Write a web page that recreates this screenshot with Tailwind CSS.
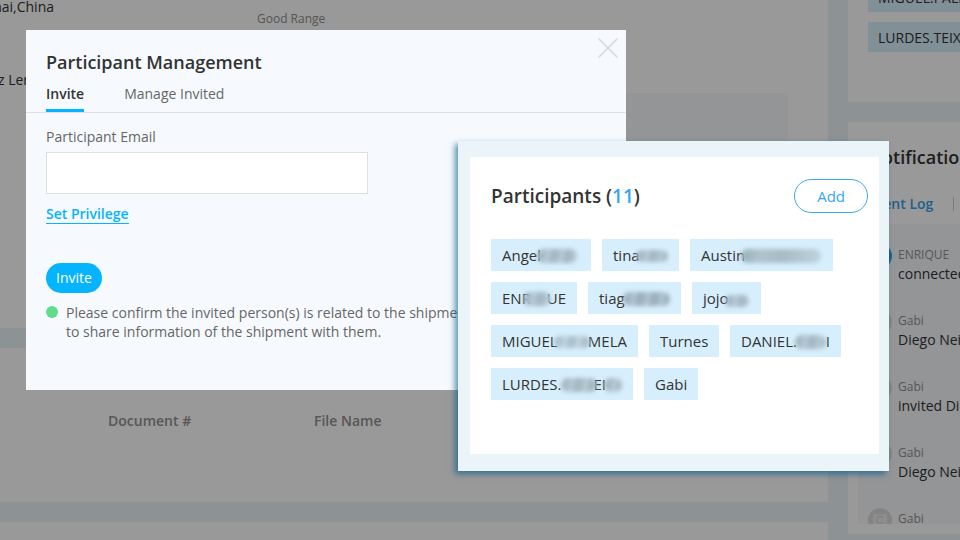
<!DOCTYPE html>
<html lang="en">
<head>
<meta charset="utf-8">
<meta name="viewport" content="width=device-width, initial-scale=1">
<title>Participant Management</title>
<script src="https://cdn.jsdelivr.net/npm/@tailwindcss/browser@4"></script>
</head>
<body class="font-['Open_Sans','Noto_Sans',sans-serif] text-sm text-[#333]">
<div class="relative h-screen overflow-hidden bg-[#ecf4f8]">

  <!-- Shipment page -->
  <div class="flex h-full gap-5">
    <main class="flex min-w-0 flex-1 flex-col gap-5">
      <section class="flex h-[328px] shrink-0 flex-col bg-white">
        <div class="flex h-[93px] shrink-0">
          <div class="flex w-[54px] shrink-0 flex-col justify-between overflow-hidden pb-1">
            <p class="flex h-[14px] items-center justify-end whitespace-nowrap">Shanghai,China</p>
            <p class="-ml-0.5 h-[19px] whitespace-nowrap leading-[19px]">z Ler</p>
          </div>
          <p class="ml-[203px] pt-2.5 text-xs leading-[18px] text-[#8e8e8e]">Good Range</p>
        </div>
        <div class="mx-10 h-[215px] bg-[#f7f9fc]"></div>
      </section>
      <section class="h-[154px] shrink-0 bg-white pl-[108px] pt-[62px]">
        <table class="text-left">
          <thead>
            <tr class="leading-[22px] text-[#919191]">
              <th scope="col" class="w-[206px] p-0 font-semibold">Document #</th>
              <th scope="col" class="w-[206px] p-0 font-semibold">File Name</th>
            </tr>
          </thead>
        </table>
      </section>
      <section class="flex-1 bg-white"></section>
    </main>

    <aside class="flex w-28 shrink-0 flex-col gap-5 overflow-hidden">
      <section class="flex h-[102px] shrink-0 flex-col items-start justify-end gap-2.5 bg-white pb-[50px] pl-5">
        <span class="flex h-[30px] shrink-0 items-center whitespace-nowrap bg-[#d7effb] px-2.5 pt-0.5">MIGUEL.PALMELA</span>
        <span class="flex h-[30px] shrink-0 items-center whitespace-nowrap bg-[#d7effb] px-2.5 pt-0.5">LURDES.TEIXEIRA</span>
      </section>
      <section class="flex h-[412px] shrink-0 flex-col bg-white pb-2.5 pl-2.5">
        <h2 class="pl-2.5 pt-[22px] text-lg font-semibold leading-[26px]">Notifications</h2>
        <div class="flex h-[54px] shrink-0 items-center gap-5 pl-2.5 pt-3.5">
          <a href="#log" class="shrink-0 font-semibold text-[#3aa0e8]">Event Log</a>
          <span class="h-3.5 w-px shrink-0 bg-[#ccc]"></span>
        </div>
        <ul class="min-h-0 flex-1 overflow-hidden bg-[#f7f9fc] pl-2.5 pt-5 whitespace-nowrap">
          <li class="flex h-[66px] gap-1.5">
            <span class="size-6 shrink-0 rounded-full bg-[#2f9fe8]"></span>
            <div><p class="text-xs leading-[22px] text-[#919191]">ENRIQUE</p><p class="leading-4">connected</p></div>
          </li>
          <li class="flex h-[66px] gap-1.5">
            <span class="size-6 shrink-0 rounded-full bg-[#dcdcdc]"></span>
            <div><p class="text-xs leading-[22px] text-[#919191]">Gabi</p><p class="leading-4">Diego Neiva</p></div>
          </li>
          <li class="flex h-[66px] gap-1.5">
            <span class="size-6 shrink-0 rounded-full bg-[#dcdcdc]"></span>
            <div><p class="text-xs leading-[22px] text-[#919191]">Gabi</p><p class="leading-4">invited Diego</p></div>
          </li>
          <li class="flex h-[66px] gap-1.5">
            <span class="size-6 shrink-0 rounded-full bg-[#dcdcdc]"></span>
            <div><p class="text-xs leading-[22px] text-[#919191]">Gabi</p><p class="leading-4">Diego Neiva</p></div>
          </li>
          <li class="flex h-[66px] gap-1.5">
            <svg class="size-6 shrink-0" viewBox="0 0 24 24" fill="none" aria-hidden="true">
              <circle cx="12" cy="12" r="12" fill="#dadada"/>
              <rect x="5" y="6" width="14" height="14" fill="#ececed"/>
              <path d="M15 9.500A3.600 3.600 0 1 0 15 14.500" stroke="#d2d2d2" stroke-width="1.200"/>
            </svg>
            <div><p class="text-xs leading-[22px] text-[#919191]">Gabi</p></div>
          </li>
        </ul>
      </section>
    </aside>
  </div>

  <div class="absolute inset-0 bg-black/40"></div>

  <!-- Participant management dialog -->
  <div role="dialog" aria-labelledby="dialog-title" class="absolute left-[26px] top-[30px] h-[360px] w-[600px] bg-[#f6fafe] text-[#666]">
    <header class="flex justify-between pl-5 pr-2 pt-2">
      <h1 id="dialog-title" class="pt-3 text-lg font-semibold leading-6 text-[#333]">Participant Management</h1>
      <button type="button" aria-label="Close" class="size-5">
        <svg viewBox="0 0 20 20" class="size-5" fill="none" stroke="#dfdfdf" stroke-width="2"><path d="M0.500 0.500L19.500 19.500M19.500 0.500L0.500 19.500"/></svg>
      </button>
    </header>
    <nav class="flex gap-10 border-b border-[#dfdfdf] px-5 pt-[9px]">
      <button type="button" class="border-b-[3px] border-[#05b4ff] pb-1 font-semibold leading-[22px] text-[#333]">Invite</button>
      <button type="button" class="border-b-[3px] border-transparent pb-1 leading-[22px]">Manage Invited</button>
    </nav>
    <form class="flex flex-col items-start px-5 pt-3">
      <label for="email" class="leading-6">Participant Email</label>
      <input id="email" type="email" class="mt-[3px] h-[42px] w-[322px] border border-[#dfdfdf] bg-white px-3">
      <a href="#privilege" class="mt-2.5 border-b border-[#05b4ff] font-semibold leading-[19px] text-[#05b4ff]">Set Privilege</a>
      <button type="button" class="mt-[39px] h-[30px] rounded-full bg-[#05b4ff] px-2.5 text-white">Invite</button>
      <div class="mt-2.5 flex gap-2">
        <span class="mt-[3px] size-3 shrink-0 rounded-full bg-[#5fdd8a]"></span>
        <p class="leading-[19px]">Please confirm the invited person(s) is related to the shipment<br>to share information of the shipment with them.</p>
      </div>
    </form>
  </div>

  <!-- Participants card -->
  <section class="absolute left-[458px] top-[141px] h-[330px] w-[431px] bg-[#ebf4f8] pb-[17px] pl-3 pr-2.5 pt-4 text-[15px] shadow-[-3px_3px_6px_#005a8ca6]">
    <div class="h-full bg-white pl-[21px] pr-[11px] pt-[22px]">
      <div class="flex items-center justify-between">
        <h2 class="pt-0.5 text-[19px] font-semibold">Participants (<span class="text-[#34a5f5]">11</span>)</h2>
        <button type="button" class="h-[34px] rounded-full border border-[#3fa9f0] px-[22px] pt-0.5 text-[#34a5f5]">Add</button>
      </div>
      <ul class="mt-[26px] flex flex-wrap gap-[11px] whitespace-nowrap">
        <li class="flex h-8 w-[100px] items-center bg-[#d7effc] px-[11px] pt-0.5">Angel<span class="-ml-1 h-3.5 w-10 rounded-full bg-[repeating-linear-gradient(100deg,#a3b8c3_0_6px,#b5cad5_11px_14px)] blur-[2px]"></span></li>
        <li class="flex h-8 w-[77px] items-center bg-[#d7effc] px-[11px] pt-0.5">tina<span class="-ml-1 h-3 w-8 rounded-full bg-[repeating-linear-gradient(100deg,#a3b8c3_0_6px,#b5cad5_11px_14px)] blur-[2px]"></span></li>
        <li class="flex h-8 w-[143px] items-center bg-[#d7effc] px-[11px] pt-0.5">Austin<span class="-ml-1 h-3.5 w-20 rounded-full bg-[linear-gradient(100deg,#98adb8,#afc4cf_25%,#a6bbc6_50%,#bdd3de)] blur-[2px]"></span></li>
        <li class="flex h-8 w-[86px] items-center bg-[#d7effc] px-[11px] pt-0.5">ENR<span class="-ml-2 -mr-1 h-3.5 flex-1 rounded-full bg-[repeating-linear-gradient(100deg,#a3b8c3_0_6px,#b5cad5_11px_14px)] blur-[2px]"></span>UE</li>
        <li class="flex h-8 w-[93px] items-center bg-[#d7effc] px-[11px] pt-0.5">tiag<span class="-ml-0.5 h-3.5 flex-1 rounded-full bg-[repeating-linear-gradient(100deg,#9bb0bb_0_6px,#b0c5d0_11px_14px)] blur-[2px]"></span></li>
        <li class="flex h-8 w-[69px] items-center bg-[#d7effc] px-[11px] pt-0.5">jojo<span class="-ml-1 mt-1 h-3 w-6 rounded-full bg-[repeating-linear-gradient(100deg,#a3b8c3_0_6px,#b5cad5_11px_14px)] blur-[2px]"></span></li>
        <li class="flex h-8 w-[147px] items-center bg-[#d7effc] px-[11px] pt-0.5">MIGUEL<span class="-ml-1 -mr-0.5 h-3 flex-1 rounded-full bg-[repeating-linear-gradient(100deg,#abc0cb_0_6px,#bfd4df_11px_14px)] blur-[2px]"></span>MELA</li>
        <li class="flex h-8 w-[70px] items-center bg-[#d7effc] px-[11px] pt-0.5">Turnes</li>
        <li class="flex h-8 w-[111px] items-center bg-[#d7effc] px-[11px] pt-0.5">DANIEL.<span class="-ml-0.5 h-3.5 flex-1 rounded-full bg-[repeating-linear-gradient(100deg,#a3b8c3_0_6px,#b5cad5_11px_14px)] blur-[2px]"></span>I</li>
        <li class="flex h-8 w-[142px] items-center bg-[#d7effc] px-[11px] pt-0.5">LURDES.<span class="h-3.5 w-9 rounded-full bg-[repeating-linear-gradient(100deg,#a3b8c3_0_6px,#b5cad5_11px_14px)] blur-[2px]"></span><span class="-ml-1">EI</span><span class="-ml-0.5 h-3.5 flex-1 rounded-full bg-[repeating-linear-gradient(100deg,#a3b8c3_0_6px,#b5cad5_11px_14px)] blur-[2px]"></span></li>
        <li class="flex h-8 items-center bg-[#d7effc] px-[11px] pt-0.5">Gabi</li>
      </ul>
    </div>
  </section>
</div>
</body>
</html>
